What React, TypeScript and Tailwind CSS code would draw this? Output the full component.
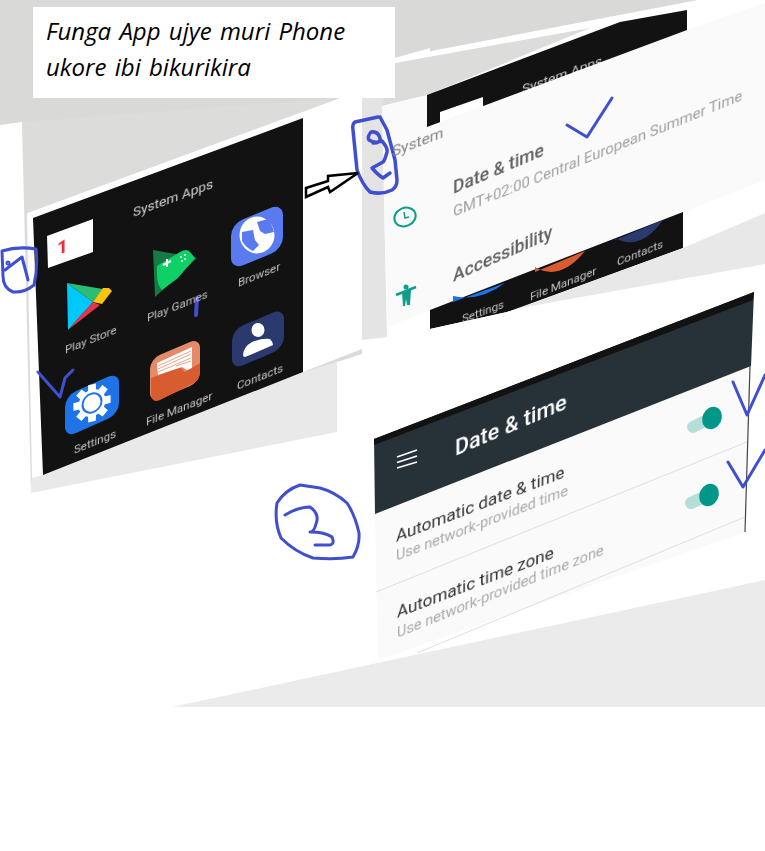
import React from "react";

type TextProps = { className: string; children: React.ReactNode };

// text laid onto the tilted phone screens
const Tilt = ({ className, children }: TextProps) => (
  <span
    className={`absolute whitespace-nowrap origin-left leading-none font-['Roboto',sans-serif] blur-[0.3px] ${className}`}
  >
    {children}
  </span>
);

const Layer = ({ children }: { children: React.ReactNode }) => (
  <svg className="absolute inset-0" width={765} height={851} viewBox="0 0 765 851">
    {children}
  </svg>
);

const gearPath = () => {
  const pts: string[] = [];
  for (let i = 0; i < 8; i++) {
    const a = (i * Math.PI) / 4;
    [
      [-0.3, 13.5],
      [-0.2, 19],
      [0.2, 19],
      [0.3, 13.5],
    ].forEach(([o, r]) => {
      pts.push(`${(Math.cos(a + o) * r).toFixed(1)},${(Math.sin(a + o) * r).toFixed(1)}`);
    });
  }
  return `M${pts.join(" L")} Z`;
};

const AppIcons = () => (
  <>
    {/* play store */}
    <polygon points="67,283 93,302 68,330" fill="#00c8fb" />
    <polygon points="67,283 103,289 93,302" fill="#2bbd73" />
    <polygon points="93,302 103,288 109,288 112,291 102,304" fill="#fcc30b" />
    <polygon points="68,330 93,302 100,305" fill="#e8344a" />

    {/* play games */}
    <polygon points="153,250 197,258 155,297" fill="#167a45" />
    <path d="M157 266 L180 252 Q187 248 190 252 L195 258 L178 278 L162 290 Q156 285 157 266 Z" fill="#0fd067" />
    <path d="M163 265 L171 261 M167 259 L167 267" stroke="#fff" strokeWidth={2} />
    <circle cx={181} cy={257} r={1} fill="#fff" />
    <circle cx={185} cy={255} r={1} fill="#fff" />
    <circle cx={185} cy={259} r={1} fill="#fff" />
    <circle cx={182} cy={261} r={1} fill="#fff" />

    {/* browser */}
    <g transform="translate(231 224) skewY(-22)">
      <rect width={52} height={46} rx={12} fill="#5a7af0" />
    </g>
    <ellipse cx={257} cy={235} rx={17.5} ry={18.5} fill="#fff" />
    <path d="M242 232 L253 230 L255 240 L259 245 L253 251 Q246 248 242 241 Z" fill="#5a7af0" />
    <path d="M257 222 L268 219 Q272 224 274 232 L265 234 L260 231 Z" fill="#5a7af0" />

    {/* settings */}
    <g transform="translate(65 396) skewY(-24)">
      <rect width={54} height={42} rx={11} fill="#1f73e8" />
    </g>
    <g transform="translate(92 403) skewY(-12)">
      <path d={gearPath()} fill="#fff" />
      <circle r={9.5} fill="none" stroke="#1f73e8" strokeWidth={2} />
    </g>

    {/* file manager */}
    <g transform="translate(150 359) skewY(-23)">
      <rect width={50} height={44} rx={10} fill="#e58a68" />
    </g>
    <path d="M151 378 L180 367 L185 372 L200 363 L200 371 Q200 380 194 383 L160 400 Q151 404 151 392 Z" fill="#d85c30" />
    <polygon points="157,363 192,347 192,368 187,370 182,367 158,375" fill="#fff" />
    <path d="M158 366 L191 351 M158 369 L191 354 M158 372 L191 358 M176 366 L191 361" stroke="#e58a68" strokeWidth={0.8} />

    {/* contacts */}
    <g transform="translate(232 330) skewY(-23)">
      <rect width={52} height={40} rx={11} fill="#2a3a6e" />
    </g>
    <ellipse cx={258} cy={330} rx={6.5} ry={7} fill="#fff" />
    <path d="M243 356 Q243 347 252 342 Q262 338 270 339 Q273 342 273 345 Q262 350 245 357 Z" fill="#fff" />
  </>
);

const App = () => (
  <div className="relative w-[765px] h-[851px] overflow-hidden bg-white">
    <Layer>
      {/* backdrop */}
      <polygon points="0,0 698,0 395,58 395,98 340,98 27,213 22,122 0,125" fill="#d9dad7" />
      <polygon points="22,122 340,98 27,213 32,478 31,493" fill="#dcdcda" />
      <polygon points="31,493 337,432 337,360 303,372 43,475 32,478" fill="#e9e9e9" />
      <polygon points="303,372 362,349 362,354 337,362" fill="#dadada" />

      {/* first phone */}
      <polygon points="33,218 303,118 303,372 43,475" fill="#121212" />
      <polygon points="47,236 93,219 93,252 48,268" fill="#fff" />
      <AppIcons />

      {/* strip and gap beside the second phone */}
      <polygon points="362,98 395,98 382,106 387,337 362,340" fill="#e4e4e4" />
      <polygon points="395,63 590,28 427,95 382,106" fill="#dcdcda" />
      <polygon points="395,58 430,48 430,52 395,63" fill="#fff" />

      {/* second phone, behind the settings sheet */}
      <polygon points="427,95 620,22 687,10 687,40 427,135" fill="#121212" />
      <polygon points="440,112 483,97 483,115 440,135" fill="#fff" />
      <polygon points="453,118 457,116 455,120" fill="#e8262f" />
    </Layer>

    <Tilt className="left-[522px] top-[83px] text-[13.7px] text-[#cfcfcf] skew-y-[-20deg]">System Apps</Tilt>

    <Layer>
      <polygon points="382,106 427,95 427,127 687,30 765,3 765,180 683,212 430,310 387,327" fill="#fafafa" />
      <polygon points="430,310 683,212 683,248 507,312 430,329" fill="#121212" />
      <path d="M453 296 Q480 302 505 283 L453 302 Z" fill="#1f73e8" />
      <path d="M535 267 Q560 282 585 251 L535 272 Z" fill="#d85c30" />
      <path d="M615 238 Q640 252 663 220 L615 240 Z" fill="#2a3a6e" />
      <polygon points="683,248 765,213 765,264 520,308" fill="#e8e8e8" />
    </Layer>

    <Tilt className="left-[462px] top-[314px] text-[11.5px] text-[#c4c4c4] skew-y-[-20deg]">Settings</Tilt>

    <Layer>
      <polygon points="430,329 507,312 520,308 520,345 430,345" fill="#fff" />

      {/* icons on the settings sheet */}
      <ellipse cx={405} cy={217} rx={11} ry={9} transform="rotate(-25 405 217)" fill="none" stroke="#0e9d8a" strokeWidth={2} />
      <path d="M404 212 L405 218 L409 217" fill="none" stroke="#0e9d8a" strokeWidth={1.5} />
      <circle cx={406} cy={287} r={2.5} fill="#0e9d8a" />
      <path d="M396 295 L416 287" stroke="#0e9d8a" strokeWidth={2.5} />
      <polygon points="402,292 411,289 410,305 407,305 406,299 405,306 403,306" fill="#0e9d8a" />

      {/* third phone */}
      <polygon points="375,514 751,366 745,532 378,660" fill="#fafafa" />
      <polygon points="374,439 754,292 751,366 375,514" fill="#263238" />
      <polygon points="374,439 754,292 753,300 374,445" fill="#121212" />
      <line x1={750} y1={366} x2={745} y2={532} stroke="#444" strokeWidth={1.2} />
      <line x1={376} y1={592} x2={747} y2={442} stroke="#dedede" />
      <line x1={417} y1={653} x2={745} y2={517} stroke="#dedede" />
      <path d="M397 457 L417 450 M397 462.5 L417 456 M397 468 L417 462" stroke="#fff" strokeWidth={1.6} />

      {/* toggles */}
      <line x1={693} y1={427} x2={711} y2={418} stroke="#b2dfd8" strokeWidth={12} strokeLinecap="round" />
      <ellipse cx={712} cy={418} rx={9.5} ry={11.5} transform="rotate(25 712 418)" fill="#009688" />
      <line x1={691} y1={503} x2={708} y2={495} stroke="#b2dfd8" strokeWidth={12} strokeLinecap="round" />
      <ellipse cx={709} cy={495} rx={9.5} ry={11.5} transform="rotate(25 709 495)" fill="#009688" />

      <polygon points="172,707 765,580 765,707" fill="#ebebeb" />

      {/* pen marks */}
      <g fill="none" stroke="#3f4fd0" strokeWidth={3} strokeLinecap="round" strokeLinejoin="round">
        <path d="M2 251 Q18 246 36 249 Q38 268 34 285 Q24 293 13 292 Q3 288 3 276 Z" />
        <path d="M5 270 L22 257 L28 280" />
        <circle cx={8} cy={263} r={1} />
        <path d="M38 372 L60 397 L65 378 L73 370" />
        <path d="M197 298 L196 315" strokeWidth={4} />
        <path d="M378 117 L355 122 Q352 124 353 130 L357 170 Q362 184 370 192 Q382 195 392 190 Q397 187 397 180 L395 160 L387 130 L380 117" strokeWidth={3.5} />
        <path d="M373 143 Q381 143 380 138 Q378 131 371 132 Q367 137 369 140 Q375 144 382 141 Q388 148 387 152 Q385 160 383 162 L372 168 Q378 175 383 178 L390 173" strokeWidth={3.5} />
        <path d="M567 125 L587 137 L612 98" />
        <path d="M300 485 Q285 490 277 503 Q274 522 281 538 Q295 552 313 558 Q335 560 353 557 Q360 545 359 533 Q355 515 347 503 Q335 492 320 488 Z" />
        <path d="M285 515 Q298 507 310 507 Q320 514 316 524 Q314 532 310 532 Q325 532 332 537 Q335 544 330 545 L315 545" />
        <path d="M733 382 L747 415 L765 375" />
        <path d="M728 462 L743 487 L765 450" />
      </g>
      <polygon
        points="306,197 306,188 328,181 328,176 358,173 330,192 328,187"
        fill="#fff"
        stroke="#000"
        strokeWidth={2.5}
      />
    </Layer>

    {/* first phone labels */}
    <Tilt className="left-[133px] top-[206px] text-[13.7px] text-[#d4d4d4] skew-y-[-20deg]">System Apps</Tilt>
    <Tilt className="left-[65px] top-[345px] text-[11.5px] text-[#c4c4c4] skew-y-[-22deg]">Play Store</Tilt>
    <Tilt className="left-[147px] top-[313px] text-[11.5px] text-[#c4c4c4] skew-y-[-22deg]">Play Games</Tilt>
    <Tilt className="left-[238px] top-[278px] text-[11.5px] text-[#c4c4c4] skew-y-[-22deg]">Browser</Tilt>
    <Tilt className="left-[146px] top-[417px] text-[11.5px] text-[#c4c4c4] skew-y-[-22deg]">File Manager</Tilt>
    <Tilt className="left-[237px] top-[381px] text-[11.5px] text-[#c4c4c4] skew-y-[-22deg]">Contacts</Tilt>
    <Tilt className="left-[74px] top-[445px] text-[11.5px] text-[#c4c4c4] skew-y-[-22deg]">Settings</Tilt>
    <Tilt className="left-[57px] top-[239px] font-bold text-[19px] text-[#e8262f] font-['DejaVu_Sans',sans-serif] skew-y-[-18deg]">1</Tilt>

    {/* second phone labels */}
    <Tilt className="left-[530px] top-[292px] text-[11.5px] text-[#c4c4c4] skew-y-[-22deg]">File Manager</Tilt>
    <Tilt className="left-[617px] top-[257px] text-[11.5px] text-[#c4c4c4] skew-y-[-22deg]">Contacts</Tilt>
    <Tilt className="left-[392px] top-[145px] text-[15.5px] text-[#858585] skew-y-[-21deg]">System</Tilt>
    <Tilt className="left-[453px] top-[180px] text-[17.5px] font-medium text-[#5f5f5f] skew-y-[-23deg]">Date &amp; time</Tilt>
    <Tilt className="left-[453px] top-[205px] text-[14.8px] text-[#a0a0a0] skew-y-[-22deg]">
      GMT+02:00 Central European Summer Time
    </Tilt>
    <Tilt className="left-[453px] top-[268px] text-[17.5px] font-medium text-[#5f5f5f] skew-y-[-24deg]">Accessibility</Tilt>

    {/* third phone labels */}
    <Tilt className="left-[455px] top-[438px] text-[21.5px] font-medium text-white skew-y-[-23deg]">Date &amp; time</Tilt>
    <Tilt className="left-[396px] top-[528px] text-[17px] text-[#333] skew-y-[-21deg]">Automatic date &amp; time</Tilt>
    <Tilt className="left-[396px] top-[550px] text-[14.5px] text-[#aaa] skew-y-[-21deg]">Use network-provided time</Tilt>
    <Tilt className="left-[397px] top-[604px] text-[17px] text-[#333] skew-y-[-21deg]">Automatic time zone</Tilt>
    <Tilt className="left-[397px] top-[627px] text-[14.5px] text-[#aaa] skew-y-[-22deg]">Use network-provided time zone</Tilt>

    {/* caption */}
    <div className="absolute left-[33px] top-[7px] w-[362px] h-[91px] bg-white pl-[13px] pt-[6px] font-['Open_Sans',sans-serif] italic text-[24px] leading-[36px] [word-spacing:2px] text-black">
      Funga App ujye muri Phone
      <br />
      ukore ibi bikurikira
    </div>
  </div>
);

export default App;
